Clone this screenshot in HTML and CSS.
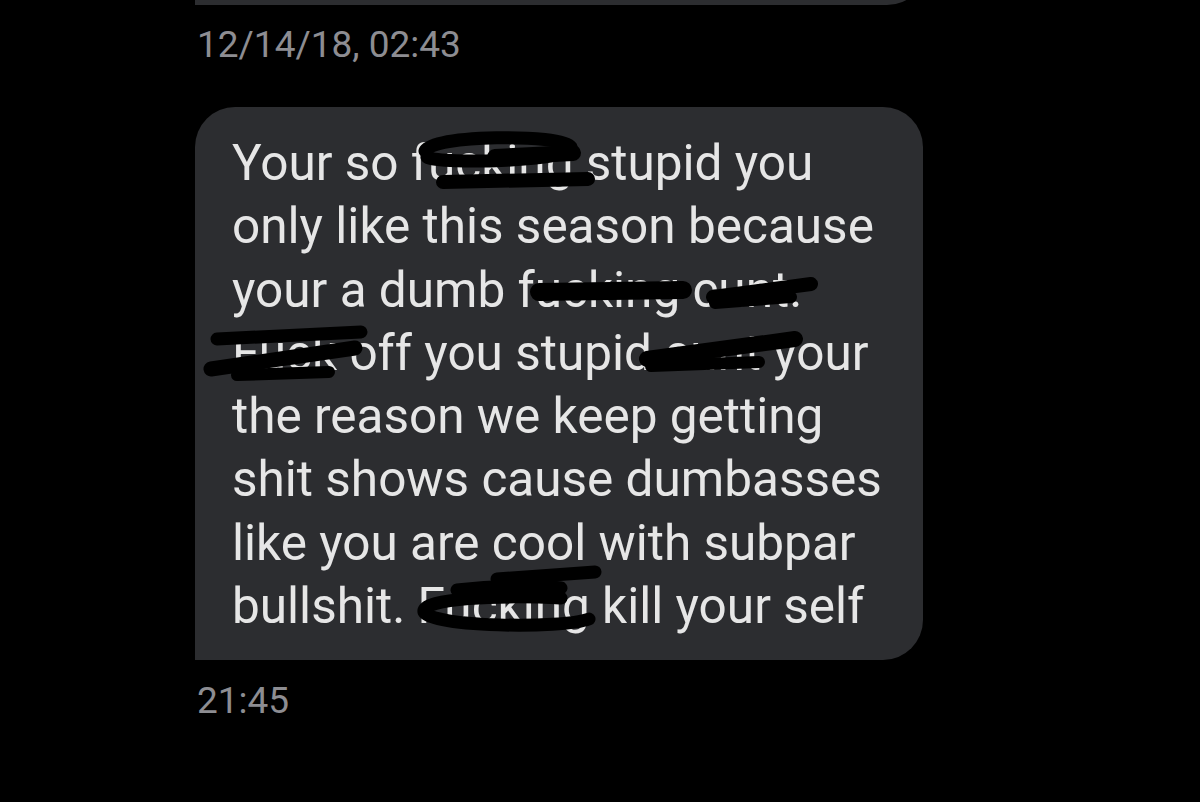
FILE: index.html
```html
<!DOCTYPE html>
<html lang="en">
<head>
<meta charset="UTF-8">
<title>Messages</title>
<link rel="stylesheet" href="styles.css">
</head>
<body>

<div class="thread">
    <div class="bubble bubble-prev"></div>
    <div class="stamp stamp-date">12/14/18, 02:43</div>

    <div class="bubble bubble-main">
        <div class="msg">
            <span class="line">Your so fucking stupid you</span>
            <span class="line">only like this season because</span>
            <span class="line">your a dumb fucking cunt.</span>
            <span class="line">Fuck off you stupid cunt your</span>
            <span class="line">the reason we keep getting</span>
            <span class="line">shit shows cause dumbasses</span>
            <span class="line">like you are cool with subpar</span>
            <span class="line">bullshit. Fucking kill your self</span>
        </div>
        <!-- marker scribbles drawn over the text -->
        <svg class="scribbles" viewBox="0 0 728 553" width="728" height="553">
            <g fill="none" stroke="#000" stroke-linecap="round" stroke-linejoin="round">
                <path stroke-width="13" d="M230 44 C236 28 366 26 376 40 C382 54 246 58 232 50"/>
                <path stroke-width="16" d="M300 50 L378 46"/>
                <path stroke-width="14" d="M248 75 L393 72"/>
                <path stroke-width="18" d="M344 185 L488 183"/>
                <path stroke-width="14" d="M518 190 L616 177"/>
                <path stroke-width="12" d="M520 196 L596 190"/>
                <path stroke-width="13" d="M22 232 L166 225"/>
                <path stroke-width="15" d="M16 262 L160 241"/>
                <path stroke-width="12" d="M42 268 L134 265"/>
                <path stroke-width="16" d="M452 252 L600 232"/>
                <path stroke-width="12" d="M456 259 L564 255"/>
                <path stroke-width="13" d="M302 472 L400 465"/>
                <path stroke-width="13" d="M262 483 C306 478 346 478 366 481"/>
                <path stroke-width="13" d="M366 491 C306 488 226 491 229 505 C236 520 366 522 394 512"/>
            </g>
        </svg>
    </div>
    <div class="stamp stamp-time">21:45</div>
</div>

</body>
</html>
```

FILE: styles.css
```css
* {
    box-sizing: border-box;
    margin: 0;
    padding: 0;
}
body {
    background-color: #000;
    font-family: "Roboto", "Liberation Sans", sans-serif;
    overflow: hidden;
}
.thread {
    display: flex;
    flex-direction: column;
    align-items: flex-start;
    padding-left: 195px;
}
.bubble {
    background-color: #2c2d30;
}
.bubble-prev {
    width: 732px;
    height: 45px;
    margin-top: -40px;
    border-radius: 0 0 40px 0;
}
.stamp {
    color: #8d8d92;
    font-size: 37px;
    line-height: 44px;
    padding-left: 2px;
}
.stamp-date {
    margin-top: 18px;
    margin-bottom: 40px;
}
.bubble-main {
    position: relative;
    width: 728px;
    height: 553px;
    border-radius: 40px 40px 40px 0;
    padding: 25px 0 0 37px;
}
.msg {
    display: flex;
    flex-direction: column;
    color: #e6e6e6;
    font-size: 49.5px;
    line-height: 63.3px;
}
.line {
    white-space: nowrap;
}
.scribbles {
    position: absolute;
    left: 0;
    top: 0;
}
.stamp-time {
    margin-top: 19px;
}
```
